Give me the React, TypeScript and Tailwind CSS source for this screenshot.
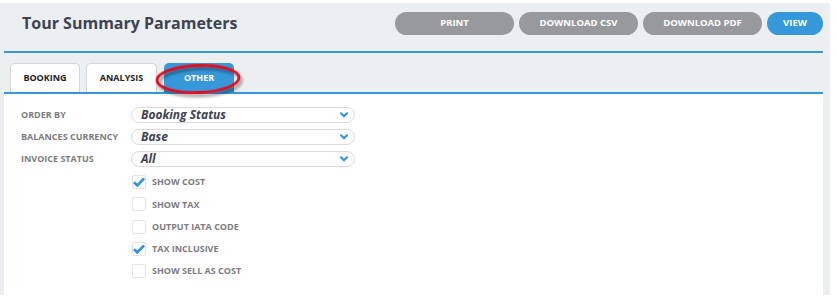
import React from "react";

const font = { fontFamily: '"Open Sans", "Noto Sans", Arial, sans-serif' };

function Chevron() {
  return (
    <svg width="8" height="6" viewBox="0 0 8 6" className="shrink-0">
      <path d="M1 1.3 L4 4.3 L7 1.3" stroke="#3498db" strokeWidth="2.2" fill="none" strokeLinecap="round" />
    </svg>
  );
}

function Check() {
  return (
    <svg width="12" height="10" viewBox="0 0 12 10">
      <path d="M1 5.2 L4.4 8.4 L11 1.4" stroke="#3498db" strokeWidth="2.8" fill="none" strokeLinejoin="round" />
    </svg>
  );
}

const selects = [
  { label: "ORDER BY", value: "Booking Status" },
  { label: "BALANCES CURRENCY", value: "Base" },
  { label: "INVOICE STATUS", value: "All" },
];

const checks = [
  { label: "SHOW COST", on: true },
  { label: "SHOW TAX", on: false },
  { label: "OUTPUT IATA CODE", on: false },
  { label: "TAX INCLUSIVE", on: true },
  { label: "SHOW SELL AS COST", on: false },
];

export default function App() {
  return (
    <div className="w-[837px] h-[305px] bg-white pt-[3px] overflow-hidden" style={font}>
      <div className="relative w-[830px] h-[292px] bg-[#eceff1] pl-[4px] pr-[7px] flex flex-col">
        {/* header */}
        <div className="h-[48px] flex items-start justify-between pt-[9px]">
          <h1 className="pl-[18px] text-[16px] leading-[23px] font-bold text-[#3d4350]">Tour Summary Parameters</h1>
          <div className="flex gap-[5px]">
            {["PRINT", "DOWNLOAD CSV", "DOWNLOAD PDF"].map((b) => (
              <button key={b} className="w-[119px] h-[23px] rounded-full bg-[#97999c] text-white text-[9.5px] font-bold">
                {b}
              </button>
            ))}
            <button className="w-[56px] h-[23px] rounded-full bg-[#3498db] text-white text-[9.5px] font-bold">VIEW</button>
          </div>
        </div>
        <div className="h-[2px] bg-[#3498db]" />

        {/* tabs */}
        <div className="h-[39px] flex items-end gap-[6px] pl-[6px] pt-[10px]">
          <div className="w-[70px] h-[29px] bg-white border border-b-0 border-[#d3d7db] rounded-t-[5px] flex items-center justify-center text-[9px] font-bold text-[#222]">
            BOOKING
          </div>
          <div className="w-[71px] h-[29px] bg-white border border-b-0 border-[#d3d7db] rounded-t-[5px] flex items-center justify-center text-[9px] font-bold text-[#222]">
            ANALYSIS
          </div>
          <div className="ml-[1px] w-[70px] h-[29px] bg-[#3498db] rounded-t-[5px] flex items-center justify-center text-[9px] font-bold text-white">
            OTHER
          </div>
        </div>
        <div className="h-[2px] bg-[#3498db]" />

        {/* content */}
        <div className="flex-1 bg-white pl-[17px] pt-[13px]">
          {selects.map((s) => (
            <div key={s.label} className="h-[22px] flex items-start">
              <div className="w-[110px] text-[9px] font-bold text-[#7b7d80] leading-[16px]">{s.label}</div>
              <div className="w-[224px] h-[16px] rounded-full border border-[#d8dadd] flex items-center justify-between pl-[9px] pr-[6px]">
                <span className="text-[12px] font-bold italic text-[#3d4350] leading-none">{s.value}</span>
                <Chevron />
              </div>
            </div>
          ))}
          <div className="-mt-[2px]">
            {checks.map((c) => (
              <div key={c.label} className="h-[22.25px] flex items-center pl-[111px]">
                <div className="w-[14px] h-[14px] border border-[#e2e4e6] rounded-[2px] flex items-center justify-center bg-white">
                  {c.on && <Check />}
                </div>
                <span className="ml-[6px] text-[9px] font-bold text-[#7b7d80]">{c.label}</span>
              </div>
            ))}
          </div>
        </div>

        {/* annotation ellipse */}
        <svg className="absolute left-[150px] top-[55px] pointer-events-none" width="100" height="44" viewBox="0 0 100 44">
          <defs>
            <filter id="sh" x="-20%" y="-30%" width="140%" height="170%">
              <feDropShadow dx="2" dy="3" stdDeviation="1.8" floodColor="#000" floodOpacity="0.4" />
            </filter>
          </defs>
          <ellipse cx="48" cy="21" rx="41" ry="13.5" transform="rotate(-2 48 21)" fill="none" stroke="#e3111b" strokeWidth="2.8" filter="url(#sh)" />
        </svg>
      </div>
    </div>
  );
}
